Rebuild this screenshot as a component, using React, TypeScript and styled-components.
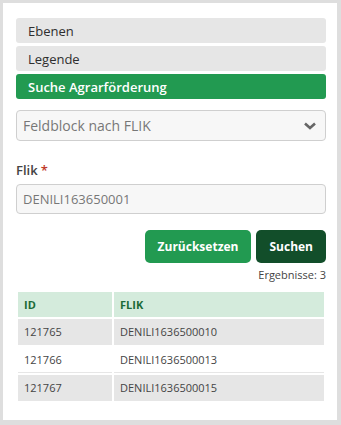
import { FC } from "react";
import styled, { createGlobalStyle } from "styled-components";

const GlobalStyle = createGlobalStyle`
  html, body {
    margin: 0;
    padding: 0;
    background: #dedede;
    font-family: "Open Sans", "Liberation Sans", sans-serif;
  }
  * { box-sizing: border-box; }
`;

const Frame = styled.div`
  width: 341px;
  height: 425px;
  padding: 3px 4px 5px 3px;
  background: #dedede;
`;

const Panel = styled.div`
  height: 100%;
  background: #fff;
  padding: 15px 11px 0 13px;
  display: flex;
  flex-direction: column;
`;

const Tabs = styled.div`
  display: flex;
  flex-direction: column;
  gap: 3px;
`;

const Tab = styled.div<{ $active?: boolean }>`
  height: 25px;
  border-radius: 3px;
  padding: 0 12px;
  display: flex;
  align-items: center;
  font-size: 13px;
  font-weight: ${(p) => (p.$active ? 600 : 400)};
  color: ${(p) => (p.$active ? "#fff" : "#2e2e2e")};
  background: ${(p) => (p.$active ? "#229a51" : "#e6e6e6")};
`;

const Select = styled.div`
  margin-top: 11px;
  height: 31px;
  border: 1px solid #cfcfcf;
  border-radius: 4px;
  background: #f7f7f7;
  display: flex;
  align-items: center;
  justify-content: space-between;
  padding: 0 8px 0 6px;
  font-size: 14px;
  color: #777;
`;

const Label = styled.div`
  margin-top: 20px;
  font-size: 13px;
  font-weight: 600;
  color: #444;
`;

const Required = styled.span`
  color: #c0392b;
  margin-left: 3px;
`;

const Input = styled.div`
  margin-top: 5px;
  height: 30px;
  border: 1px solid #cfcfcf;
  border-radius: 4px;
  background: #f7f7f7;
  display: flex;
  align-items: center;
  padding: 0 6px;
  font-size: 13px;
  color: #777;
`;

const Actions = styled.div`
  margin-top: 16px;
  display: flex;
  justify-content: flex-end;
  gap: 5px;
`;

const Button = styled.div<{ $dark?: boolean }>`
  height: 33px;
  border-radius: 5px;
  padding: 0 13px;
  display: flex;
  align-items: center;
  font-size: 12px;
  font-weight: 700;
  color: #fff;
  background: ${(p) => (p.$dark ? "#124e2a" : "#229a51")};
`;

const Results = styled.div`
  margin-top: 4px;
  text-align: right;
  font-size: 11px;
  line-height: 15px;
  color: #444;
`;

const Table = styled.table`
  margin-top: 8px;
  width: 100%;
  border-spacing: 2px;
  font-size: 11px;
`;

const Th = styled.th<{ $w?: number }>`
  height: 25px;
  text-align: left;
  padding: 0 6px;
  background: #d4ebdc;
  color: #1d6b38;
  font-weight: 700;
  width: ${(p) => (p.$w ? `${p.$w}px` : "auto")};
`;

const Td = styled.td<{ $odd?: boolean }>`
  height: 26px;
  padding: 0 6px;
  color: #444;
  background: ${(p) => (p.$odd ? "#e6e6e6" : "#fff")};
  border-bottom: 1px solid #e6e6e6;
`;

const Chevron: FC = () => (
  <svg width="14" height="10" viewBox="0 0 14 10">
    <path d="M2 2.5 L7 7 L12 2.5" fill="none" stroke="#666" strokeWidth="2.6" />
  </svg>
);

const rows = [
  { id: "121765", flik: "DENILI1636500010" },
  { id: "121766", flik: "DENILI1636500013" },
  { id: "121767", flik: "DENILI1636500015" },
];

const App: FC = () => {
  return (
    <>
      <GlobalStyle />
      <Frame>
        <Panel>
          <Tabs>
            <Tab>Ebenen</Tab>
            <Tab>Legende</Tab>
            <Tab $active>Suche Agrarförderung</Tab>
          </Tabs>
          <Select>
            <span>Feldblock nach FLIK</span>
            <Chevron />
          </Select>
          <Label>
            Flik<Required>*</Required>
          </Label>
          <Input>DENILI163650001</Input>
          <Actions>
            <Button>Zurücksetzen</Button>
            <Button $dark>Suchen</Button>
          </Actions>
          <Results>Ergebnisse: 3</Results>
          <Table>
            <thead>
              <tr>
                <Th $w={94}>ID</Th>
                <Th>FLIK</Th>
              </tr>
            </thead>
            <tbody>
              {rows.map((r, i) => (
                <tr key={r.id}>
                  <Td $odd={i % 2 === 0}>{r.id}</Td>
                  <Td $odd={i % 2 === 0}>{r.flik}</Td>
                </tr>
              ))}
            </tbody>
          </Table>
        </Panel>
      </Frame>
    </>
  );
};

export default App;
